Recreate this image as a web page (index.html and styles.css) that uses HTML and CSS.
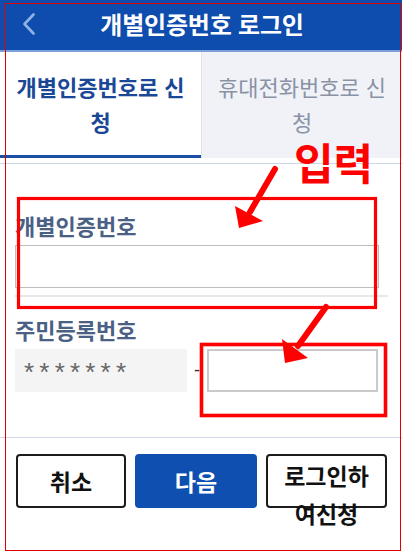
FILE: index.html
```html
<!DOCTYPE html>
<html lang="ko">
<head>
<meta charset="utf-8">
<link rel="stylesheet" href="styles.css">
</head>
<body>
<div class="page">
  <header class="header">
    <svg class="back" width="14" height="22" viewBox="0 0 14 22"><path d="M11.5 1.5 L2.5 11 L11.5 20.5" fill="none" stroke="#8fb1e3" stroke-width="2.6" stroke-linecap="round" stroke-linejoin="round"/></svg>
    <h1 class="title">개별인증번호 로그인</h1>
  </header>
  <nav class="tabs">
    <div class="tab active">개별인증번호로 신<br>청</div>
    <div class="tab">휴대전화번호로 신<br>청</div>
  </nav>
  <div class="tabline"></div>
  <main class="form">
    <div class="field">
      <div class="label">개별인증번호</div>
      <div class="input wide"></div>
    </div>
    <div class="field second">
      <div class="label">주민등록번호</div>
      <div class="rrn">
        <div class="masked">*******</div>
        <span class="dash">-</span>
        <div class="input half"></div>
      </div>
    </div>
  </main>
  <div class="actions">
    <button class="btn">취소</button>
    <button class="btn primary">다음</button>
    <button class="btn tall">로그인하<br>여신청</button>
  </div>

  <div class="note">입력</div>
  <svg class="marks" width="402" height="556" viewBox="0 0 402 556">
    <rect x="5.5" y="3.5" width="395" height="547" fill="none" stroke="#e00000" stroke-width="1"/>
    <rect x="18.5" y="198.5" width="357" height="109" fill="none" stroke="#ff0000" stroke-width="3.2"/>
    <rect x="201.5" y="344.5" width="184" height="71" fill="none" stroke="#ff0000" stroke-width="3.6"/>
    <line x1="275" y1="169" x2="250" y2="212" stroke="#ff0000" stroke-width="6" stroke-linecap="round"/>
    <polygon points="235,206 263,221 239,228" fill="#ff0000"/>
    <line x1="326" y1="307" x2="298" y2="346" stroke="#ff0000" stroke-width="6" stroke-linecap="round"/>
    <polygon points="282,339 308,358 285,363" fill="#ff0000"/>
  </svg>
</div>
</body>
</html>
```
FILE: styles.css
```css
* { box-sizing: border-box; }
html, body { margin: 0; padding: 0; background: #fff; }
body {
  font-family: "Noto Sans CJK KR", "Noto Sans", sans-serif;
  width: 402px;
  height: 556px;
  overflow: hidden;
}
.page { position: relative; width: 402px; height: 556px; }

.header {
  height: 52px;
  background: #0e4cad;
  border-bottom: 2px solid #7d9fd8;
  display: flex;
  align-items: center;
  justify-content: center;
  position: relative;
}
.back { position: absolute; left: 22px; top: 13px; }
.title {
  margin: 0 0 2px 2px;
  color: #fff;
  font-size: 24px;
  font-weight: 700;
  line-height: 1;
  letter-spacing: -0.2px;
}

.tabs {
  display: grid;
  grid-template-columns: 201px 1fr;
  height: 106px;
}
.tab {
  display: flex;
  align-items: center;
  justify-content: center;
  text-align: center;
  font-size: 22px;
  line-height: 35px;
  color: #8a93a6;
  background: #f1f2f7;
  border-left: 1px solid #dfe2ea;
  padding-bottom: 3px;
}
.tab.active {
  background: #fff;
  color: #1b4797;
  font-weight: 700;
  border-left: 0;
  border-bottom: 3px solid #1a4fa3;
  padding-bottom: 0;
}
.tabline {
  height: 1px;
  background: #c9d5e9;
  margin-top: 5px;
}

.form { padding: 47px 14px 0 15px; }
.label {
  font-size: 22px;
  font-weight: 700;
  color: #4a6185;
  line-height: 28px;
}
.field { padding-bottom: 7px; border-bottom: 2px solid #e8e8e8; }
.field.second { border-bottom: 0; padding-top: 18px; }
.input {
  background: #fff;
  border: 1px solid #bdbdbd;
  height: 43px;
}
.input.wide { width: 364px; margin-top: 6px; }
.rrn {
  display: flex;
  align-items: center;
  margin-top: 6px;
  height: 43px;
}
.masked {
  width: 172px;
  height: 43px;
  background: #f4f4f4;
  color: #666;
  font-family: "Liberation Sans", sans-serif;
  font-size: 26px;
  letter-spacing: 5.2px;
  padding-left: 9px;
  line-height: 46px;
}
.dash {
  width: 20px;
  text-align: center;
  font-family: "Liberation Sans", sans-serif;
  font-size: 18px;
  color: #333;
}
.input.half { width: 171px; border: 2px solid #cacaca; }

.actions {
  margin-top: 38px;
  border-top: 1px solid #d2daea;
  display: grid;
  grid-template-columns: 110px 122px 121px;
  gap: 9px;
  padding: 16px 0 0 16px;
}
.btn {
  height: 54px;
  font-family: "Noto Sans CJK KR", sans-serif;
  font-size: 23px;
  font-weight: 700;
  color: #111;
  background: #fff;
  border: 2px solid #1c1c1c;
  border-radius: 4px;
  padding: 0;
}
.btn.primary { background: #0f4fb0; border-color: #0f4fb0; color: #fff; }
.btn.tall {
  line-height: 38px;
  padding-top: 0;
  overflow: visible;
  white-space: nowrap;
  display: flex;
  flex-direction: column;
  align-items: center;
  justify-content: flex-start;
}

.note {
  position: absolute;
  left: 294px;
  top: 144px;
  font-size: 43px;
  font-weight: 700;
  line-height: 0.8;
  color: #ff0000;
}
.marks { position: absolute; left: 0; top: 0; pointer-events: none; }
```
